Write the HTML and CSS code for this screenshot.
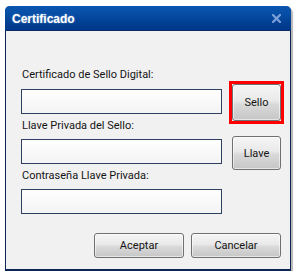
FILE: index.html
```html
<!DOCTYPE html>
<html lang="es">
<head>
<meta charset="utf-8">
<title>Certificado</title>
<link rel="stylesheet" href="styles.css">
</head>
<body>
<div class="window">
  <div class="titlebar">
    <span class="title">Certificado</span>
    <svg class="close" width="9" height="9" viewBox="0 0 9 9"><path d="M1 1 L8 8 M8 1 L1 8" stroke="#7ca2dc" stroke-width="2.2" stroke-linecap="square"/></svg>
  </div>
  <div class="content">
    <label class="label first">Certificado de Sello Digital:</label>
    <div class="row">
      <input class="field" type="text">
      <span class="highlight"><button class="btn sello">Sello</button></span>
    </div>
    <label class="label">Llave Privada del Sello:</label>
    <div class="row">
      <input class="field" type="text">
      <button class="btn side llave">Llave</button>
    </div>
    <label class="label">Contraseña Llave Privada:</label>
    <div class="row">
      <input class="field" type="password">
    </div>
    <div class="actions">
      <button class="btn action">Aceptar</button>
      <button class="btn action">Cancelar</button>
    </div>
  </div>
</div>
</body>
</html>
```
FILE: styles.css
```css
html, body {
  margin: 0;
  padding: 0;
  background: #ffffff;
}
body {
  font-family: Roboto, "Liberation Sans", sans-serif;
  font-size: 11px;
  color: #141414;
}
.window {
  margin: 6px 0 0 5px;
  width: 286px;
  height: 265px;
  box-sizing: border-box;
  border: 1px solid #0d2555;
  border-top: none;
  border-bottom-width: 2px;
  border-radius: 5px 5px 0 0;
  background: #f1f1f1;
  box-shadow: 2px 2px 1px rgba(0, 0, 0, 0.28);
  display: flex;
  flex-direction: column;
}
.titlebar {
  height: 25px;
  margin: 0 -1px;
  border-radius: 5px 5px 0 0;
  background: linear-gradient(#0a56b0 0%, #064ba2 40%, #013f92 70%, #00378a 100%);
  border-bottom: 1px solid #0a2a6a;
  box-sizing: border-box;
  display: flex;
  align-items: center;
  justify-content: space-between;
  padding: 0 10px 0 7px;
}
.title {
  font-family: "Liberation Sans", Arial, sans-serif;
  font-weight: bold;
  font-size: 12px;
  color: #ffffff;
  text-shadow: 0 0 2px rgba(190, 220, 255, 0.6);
  padding-top: 1px;
}
.close {
  display: block;
  margin-top: 1px;
}
.content {
  padding: 37px 0 0 15px;
  display: flex;
  flex-direction: column;
}
.label {
  display: block;
  line-height: 13px;
  margin: 0 0 7px 1px;
}
.label.first {
  margin-bottom: 8px;
}
.row {
  display: flex;
  align-items: flex-start;
  height: 25px;
  margin-bottom: 5px;
}
.field {
  width: 201px;
  height: 25px;
  box-sizing: border-box;
  margin: 0;
  border: 1px solid #2f3f60;
  background: linear-gradient(#ffffff, #f3f3f3);
  font: inherit;
  padding: 0 3px;
}
.btn {
  box-sizing: border-box;
  margin: 0;
  padding: 0;
  border: 1px solid #707070;
  border-radius: 3px;
  background: linear-gradient(#f5f5f5 0%, #e9e9e9 45%, #d9d9d9 55%, #c6c6c6 100%);
  box-shadow: inset 0 0 0 1px rgba(255, 255, 255, 0.55);
  font-family: Roboto, "Liberation Sans", sans-serif;
  font-size: 11px;
  color: #141414;
}
.side {
  width: 49px;
  margin-left: 10px;
}
.highlight {
  display: flex;
  border: 3px solid #ff0000;
  margin: -8px 0 0 7px;
}
.sello {
  width: 49px;
  height: 37px;
}
.llave {
  height: 34px;
  margin-top: -3px;
}
.actions {
  display: flex;
  gap: 7px;
  margin-top: 14px;
  padding-left: 73px;
}
.action {
  width: 90px;
  height: 25px;
}
```
